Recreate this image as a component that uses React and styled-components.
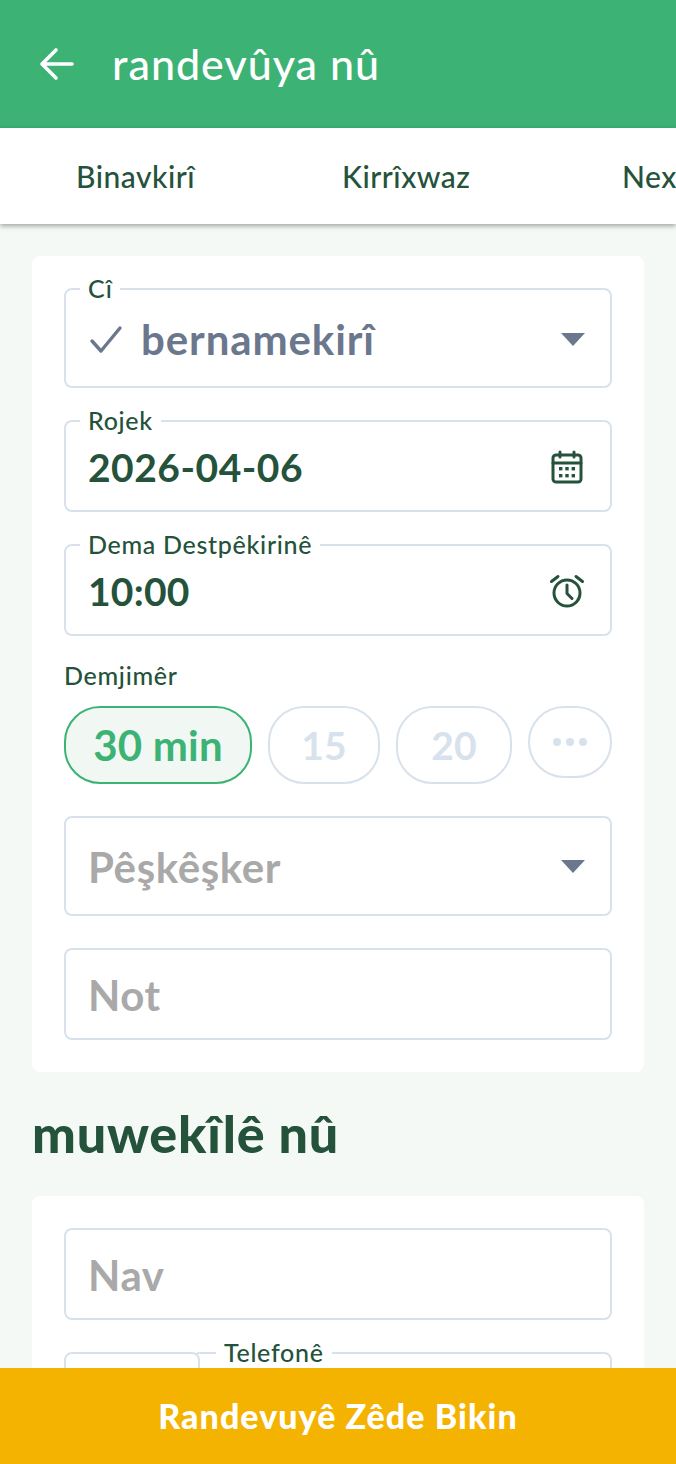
import React from 'react'
import styled, { createGlobalStyle } from 'styled-components'

const green = '#3CB275'
const dark = '#24523B'
const line = '#D8E2EC'
const muted = '#6A778C'
const hint = '#A9A9A9'

const Global = createGlobalStyle`
  * {
    margin: 0;
    padding: 0;
    box-sizing: border-box;
  }
  body {
    font-family: Lato, "Noto Sans", sans-serif;
    background: #F4F9F6;
  }
`

const Screen = styled.div`
  width: 676px;
  height: 1464px;
  display: flex;
  flex-direction: column;
  overflow: hidden;
  background: #F4F9F6;
`

const Header = styled.header`
  height: 128px;
  flex: none;
  display: flex;
  align-items: center;
  gap: 37px;
  padding-left: 39px;
  background: ${green};
`

const BackIcon = styled.svg`
  width: 36px;
  height: 36px;
  fill: none;
  stroke: #fff;
  stroke-width: 3.6;
  stroke-linecap: round;
  stroke-linejoin: round;
`

const Title = styled.h1`
  font-size: 43px;
  line-height: 48px;
  font-weight: 500;
  color: #fff;
  letter-spacing: 1px;
`

const Tabs = styled.nav`
  height: 96px;
  flex: none;
  display: flex;
  align-items: center;
  overflow: hidden;
  padding-left: 76px;
  background: #fff;
  box-shadow: 0 2px 5px rgba(0, 0, 0, 0.35);
  position: relative;
  z-index: 1;
`

const Tab = styled.span`
  flex: none;
  width: ${p => p.$width}px;
  font-size: 30px;
  font-weight: 500;
  color: ${dark};
  white-space: nowrap;
  letter-spacing: 0.5px;
`

const Body = styled.main`
  flex: 1;
  min-height: 0;
  overflow: hidden;
  padding: 32px 32px 0;
`

const Card = styled.section`
  display: flex;
  flex-direction: column;
  padding: 32px;
  background: #fff;
  border-radius: 8px;
`

const Field = styled.div`
  position: relative;
  z-index: ${p => (p.$front ? 1 : 0)};
  height: ${p => p.$height || 92}px;
  flex: ${p => (p.$grow ? 1 : 'none')};
  width: ${p => (p.$width ? `${p.$width}px` : 'auto')};
  margin-top: ${p => p.$top ?? 32}px;
  margin-left: ${p => p.$overlap || 0}px;
  display: flex;
  align-items: center;
  justify-content: space-between;
  padding: ${p => (p.$raised ? '2px' : '0')} 25px 0 22px;
  border: 2px solid ${line};
  border-radius: 8px;
  background: #fff;
`

const FloatLabel = styled.label`
  position: absolute;
  top: -16px;
  left: ${p => p.$left || 14}px;
  padding: 0 8px;
  background: #fff;
  font-size: 25px;
  line-height: 28px;
  font-weight: 500;
  color: ${dark};
  letter-spacing: 0.7px;
  white-space: nowrap;
`

const Value = styled.span`
  display: flex;
  align-items: center;
  gap: 17px;
  font-size: ${p => p.$size || 39}px;
  line-height: 48px;
  font-weight: 700;
  letter-spacing: ${p => p.$track ?? 0.5}px;
  color: ${p => p.$color || dark};
`

const Placeholder = styled.span`
  margin-top: 2px;
  font-size: 42px;
  line-height: 48px;
  font-weight: 700;
  letter-spacing: 0.6px;
  color: ${hint};
`

const Caret = styled.span`
  width: 0;
  height: 0;
  border-left: 12px solid transparent;
  border-right: 12px solid transparent;
  border-top: 13px solid ${muted};
`

const CheckIcon = styled.svg`
  width: 36px;
  height: 36px;
  fill: none;
  stroke: ${muted};
  stroke-width: 3.4;
  stroke-linecap: round;
  stroke-linejoin: round;
`

const SideIcon = styled.svg`
  width: 36px;
  height: 36px;
  fill: none;
  stroke: ${dark};
  stroke-width: 3;
  stroke-linecap: round;
  stroke-linejoin: round;
`

const SectionLabel = styled.div`
  margin-top: 25px;
  font-size: 25px;
  line-height: 28px;
  font-weight: 500;
  color: ${dark};
  letter-spacing: 0.7px;
`

const Chips = styled.div`
  display: flex;
  align-items: flex-start;
  justify-content: space-between;
  margin-top: 17px;
`

const Chip = styled.button`
  width: ${p => p.$width}px;
  height: ${p => p.$height || 78}px;
  display: flex;
  align-items: center;
  justify-content: center;
  gap: 5px;
  border: 2px solid ${p => (p.$active ? green : line)};
  border-radius: 36px;
  background: ${p => (p.$active ? '#F1F8F4' : '#fff')};
  color: ${p => (p.$active ? green : line)};
  font-family: inherit;
  font-size: ${p => p.$size || 39}px;
  font-weight: 700;
  letter-spacing: 0.2px;
`

const Dot = styled.i`
  width: 8px;
  height: 8px;
  border-radius: 50%;
  background: ${line};
`

const Heading = styled.h2`
  margin: 31px 0 33px;
  font-size: 52px;
  line-height: 60px;
  font-weight: 900;
  color: ${dark};
  letter-spacing: 0.8px;
`

const PhoneRow = styled.div`
  display: flex;
  margin-top: 32px;
`

const SubmitBar = styled.button`
  height: 96px;
  flex: none;
  border: 0;
  padding-bottom: 2px;
  background: #F5B301;
  color: #fff;
  font-family: inherit;
  font-size: 34px;
  font-weight: 900;
  letter-spacing: 1.05px;
`

const Calendar = () => (
  <SideIcon viewBox="0 0 36 36">
    <rect x="4" y="6" width="28" height="27" rx="3" />
    <path d="M4 14h28M11 3v5M25 3v5" />
    <g fill="#24523B" stroke="none">
      <rect x="10" y="18" width="3.4" height="3.4" />
      <rect x="16.3" y="18" width="3.4" height="3.4" />
      <rect x="22.6" y="18" width="3.4" height="3.4" />
      <rect x="10" y="25" width="3.4" height="3.4" />
      <rect x="16.3" y="25" width="3.4" height="3.4" />
      <rect x="22.6" y="25" width="3.4" height="3.4" />
    </g>
  </SideIcon>
)

const Alarm = () => (
  <SideIcon viewBox="0 0 36 36">
    <circle cx="18" cy="20" r="13" />
    <path d="M18 12v8.5l5 5M2.5 8.5 9 3.5M33.5 8.5 27 3.5" />
  </SideIcon>
)

export default function App() {
  return (
    <Screen>
      <Global />
      <Header>
        <BackIcon viewBox="0 0 36 36">
          <path d="M33 18H4M17 4 3 18l14 14" />
        </BackIcon>
        <Title>randevûya nû</Title>
      </Header>
      <Tabs>
        <Tab $width={266}>Binavkirî</Tab>
        <Tab $width={280}>Kirrîxwaz</Tab>
        <Tab $width={120}>Nexşe</Tab>
      </Tabs>
      <Body>
        <Card>
          <Field $height={100} $top={0} $raised>
            <FloatLabel>Cî</FloatLabel>
            <Value $color={muted} $size={42} $track={0.9}>
              <CheckIcon viewBox="0 0 36 36">
                <path d="M4 20l9 10L32 7" />
              </CheckIcon>
              bernamekirî
            </Value>
            <Caret />
          </Field>
          <Field $raised>
            <FloatLabel>Rojek</FloatLabel>
            <Value>2026-04-06</Value>
            <Calendar />
          </Field>
          <Field $raised>
            <FloatLabel>Dema Destpêkirinê</FloatLabel>
            <Value $track={0.2}>10:00</Value>
            <Alarm />
          </Field>
          <SectionLabel>Demjimêr</SectionLabel>
          <Chips>
            <Chip $width={188} $active $size={42}>30 min</Chip>
            <Chip $width={112}>15</Chip>
            <Chip $width={116}>20</Chip>
            <Chip $width={84} $height={72}>
              <Dot />
              <Dot />
              <Dot />
            </Chip>
          </Chips>
          <Field $height={100}>
            <Placeholder>Pêşkêşker</Placeholder>
            <Caret />
          </Field>
          <Field>
            <Placeholder>Not</Placeholder>
          </Field>
        </Card>
        <Heading>muwekîlê nû</Heading>
        <Card>
          <Field $top={0}>
            <Placeholder>Nav</Placeholder>
          </Field>
          <PhoneRow>
            <Field $width={136} $top={0} $front />
            <Field $grow $top={0} $overlap={-8}>
              <FloatLabel $left={22}>Telefonê</FloatLabel>
            </Field>
          </PhoneRow>
        </Card>
      </Body>
      <SubmitBar>Randevuyê Zêde Bikin</SubmitBar>
    </Screen>
  )
}
